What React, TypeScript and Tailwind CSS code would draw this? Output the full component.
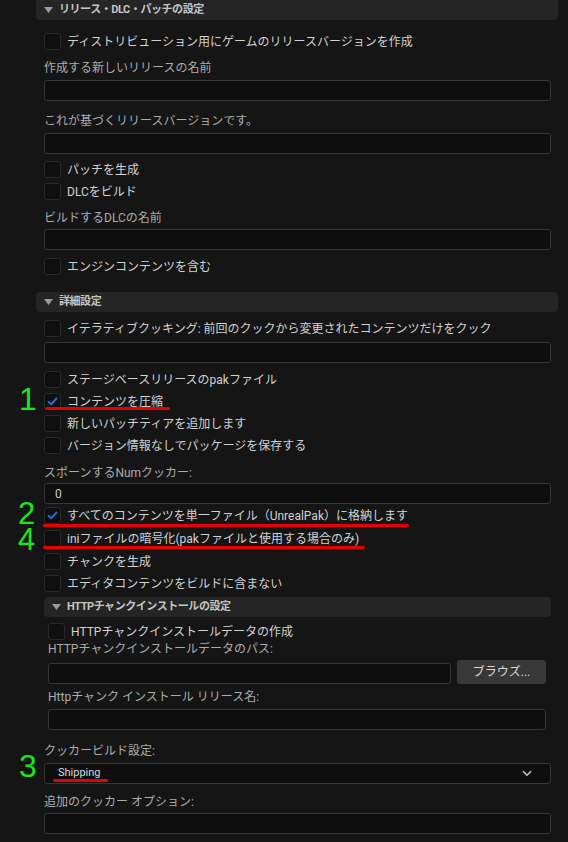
import React from 'react';

const font = { fontFamily: 'Roboto, "Noto Sans CJK JP", sans-serif' };
const numFont = { fontFamily: '"Liberation Sans", sans-serif' };

function Check({ checked = false }: { checked?: boolean }) {
  return (
    <div className="w-[17px] h-[17px] shrink-0 rounded-[3px] border border-[#2a2a2a] bg-[#0f0f0f] flex items-center justify-center">
      {checked && (
        <svg width="11" height="9" viewBox="0 0 11 9">
          <path d="M1.5 4.8 L4.2 7.2 L9.5 1.5" stroke="#1f6fd8" strokeWidth="2" fill="none" strokeLinecap="round" strokeLinejoin="round" />
        </svg>
      )}
    </div>
  );
}

function CheckRow({ label, checked, className = '' }: { label: string; checked?: boolean; className?: string }) {
  return (
    <div className={`flex items-center gap-[6px] h-[17px] ${className}`}>
      <Check checked={checked} />
      <span className="text-[12px] text-[#d2d2d2] whitespace-nowrap leading-none">{label}</span>
    </div>
  );
}

function Label({ text, className = '' }: { text: string; className?: string }) {
  return <div className={`h-[16px] leading-[16px] text-[12px] text-[#ababab] whitespace-nowrap ${className}`}>{text}</div>;
}

function Input({ value = '', className = '' }: { value?: string; className?: string }) {
  return (
    <div className={`h-[21px] rounded-[3px] border border-[#353535] bg-[#0e0e0e] flex items-center px-[10px] text-[12px] text-[#d0d0d0] ${className}`}>
      {value}
    </div>
  );
}

function Header({ title, className = '' }: { title: string; className?: string }) {
  return (
    <div className={`h-[20px] rounded-[4px] bg-[#252525] flex items-center gap-[6px] pl-[8px] ${className}`}>
      <svg width="9" height="6" viewBox="0 0 9 6">
        <path d="M0 0 L9 0 L4.5 6 Z" fill="#9a9a9a" />
      </svg>
      <span className="text-[11px] font-bold text-[#c4c4c4] tracking-[-0.04em] whitespace-nowrap">{title}</span>
    </div>
  );
}

export default function App() {
  return (
    <div className="relative w-[568px] h-[842px] overflow-hidden bg-[#151515]" style={font}>
      <div className="flex flex-col">
        <Header title="リリース・DLC・パッチの設定" className="ml-[36px] w-[522px] h-[19px] rounded-t-none" />
        <div className="flex flex-col pl-[44px] w-[551px]">
          <CheckRow label="ディストリビューション用にゲームのリリースバージョンを作成" className="mt-[13px]" />
          <Label text="作成する新しいリリースの名前" className="mt-[10px]" />
          <Input className="mt-[4px]" />
          <Label text="これが基づくリリースバージョンです。" className="mt-[12px]" />
          <Input className="mt-[4px]" />
          <CheckRow label="パッチを生成" className="mt-[7px]" />
          <CheckRow label="DLCをビルド" className="mt-[5px]" />
          <Label text="ビルドするDLCの名前" className="mt-[10px]" />
          <Input className="mt-[3px]" />
          <CheckRow label="エンジンコンテンツを含む" className="mt-[8px]" />
        </div>
        <Header title="詳細設定" className="ml-[36px] w-[522px] mt-[17px]" />
        <div className="flex flex-col pl-[44px] w-[551px]">
          <CheckRow label="イテラティブクッキング: 前回のクックから変更されたコンテンツだけをクック" className="mt-[8px]" />
          <Input className="mt-[5px]" />
          <CheckRow label="ステージベースリリースのpakファイル" className="mt-[8px]" />
          <CheckRow label="コンテンツを圧縮" checked className="mt-[5px]" />
          <CheckRow label="新しいパッチティアを追加します" className="mt-[5px]" />
          <CheckRow label="バージョン情報なしでパッケージを保存する" className="mt-[5px]" />
          <Label text="スポーンするNumクッカー:" className="mt-[11px]" />
          <Input value="0" className="mt-[2px]" />
          <CheckRow label="すべてのコンテンツを単一ファイル（UnrealPak）に格納します" checked className="mt-[3px]" />
          <CheckRow label="iniファイルの暗号化(pakファイルと使用する場合のみ)" className="mt-[6px]" />
          <CheckRow label="チャンクを生成" className="mt-[6px]" />
          <CheckRow label="エディタコンテンツをビルドに含まない" className="mt-[5px]" />
          <Header title="HTTPチャンクインストールの設定" className="mt-[5px]" />
          <div className="flex flex-col pl-[4px] pr-[5px]">
            <CheckRow label="HTTPチャンクインストールデータの作成" className="mt-[6px]" />
            <Label text="HTTPチャンクインストールデータのパス:" className="mt-[1px]" />
            <div className="flex items-end gap-[6px] h-[24px] mt-[3px]">
              <Input className="flex-1" />
              <button className="w-[89px] h-[24px] rounded-[3px] bg-[#383838] text-[12px] text-[#d8d8d8]">ブラウズ...</button>
            </div>
            <Label text="Httpチャンク インストール リリース名:" className="mt-[5px]" />
            <Input className="mt-[4px]" />
          </div>
          <Label text="クッカービルド設定:" className="mt-[13px]" />
          <div className="mt-[4px] h-[21px] rounded-[3px] border border-[#353535] bg-[#0e0e0e] flex items-center justify-between pl-[13px] pr-[18px]">
            <span className="text-[11px] text-[#d8d8d8]">Shipping</span>
            <svg width="10" height="7" viewBox="0 0 10 7">
              <path d="M1 1.2 L5 5.2 L9 1.2" stroke="#c8c8c8" strokeWidth="1.6" fill="none" />
            </svg>
          </div>
          <Label text="追加のクッカー オプション:" className="mt-[10px]" />
          <Input className="mt-[3px]" />
        </div>
      </div>

      {/* annotations */}
      <div className="absolute left-[19px] top-[388px] h-[23px] text-[32px] leading-[23px] text-[#1be61b]" style={numFont}>1</div>
      <div className="absolute left-[18px] top-[503px] h-[22px] text-[31px] leading-[22px] text-[#1be61b]" style={numFont}>2</div>
      <div className="absolute left-[18px] top-[529px] h-[22px] text-[31px] leading-[22px] text-[#1be61b]" style={numFont}>4</div>
      <div className="absolute left-[19px] top-[755px] h-[23px] text-[32px] leading-[23px] text-[#1be61b]" style={numFont}>3</div>
      <div className="absolute left-[45px] top-[407px] w-[125px] h-[3px] bg-[#e60000] rounded-full" />
      <div className="absolute left-[43px] top-[524px] w-[366px] h-[3px] bg-[#e60000] rounded-full" />
      <div className="absolute left-[43px] top-[546px] w-[322px] h-[3px] bg-[#e60000] rounded-full" />
      <div className="absolute left-[53px] top-[779px] w-[55px] h-[3px] bg-[#e60000] rounded-full" />
    </div>
  );
}
